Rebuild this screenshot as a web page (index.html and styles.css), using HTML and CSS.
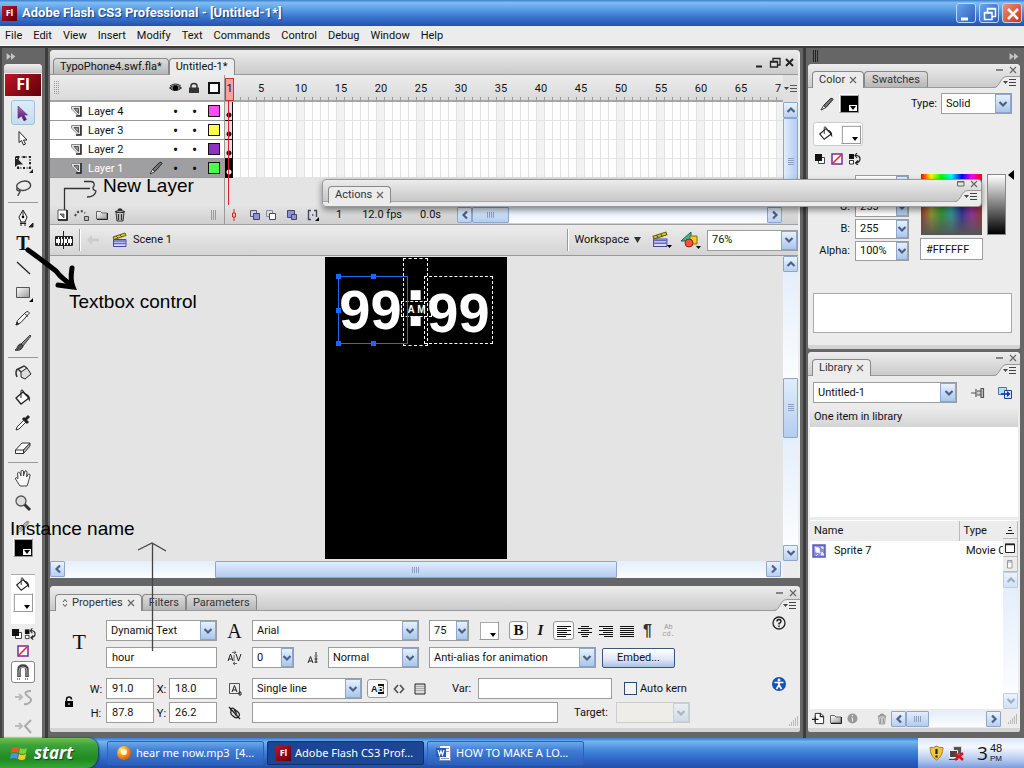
FILE: index.html
```html
<!DOCTYPE html>
<html lang="en">
<head>
<meta charset="utf-8">
<title>Adobe Flash CS3 Professional - [Untitled-1*]</title>
<link rel="stylesheet" href="styles.css">
</head>
<body>
<svg width="0" height="0" class="defs" aria-hidden="true">
  <defs>
    <linearGradient id="gGrey" x1="0" y1="0" x2="1" y2="1"><stop offset="0" stop-color="#fff"/><stop offset="1" stop-color="#999"/></linearGradient>
    <linearGradient id="gPurple" x1="0" y1="0" x2="0" y2="1"><stop offset="0" stop-color="#c060d0"/><stop offset="1" stop-color="#401060"/></linearGradient>
    <radialGradient id="gOrange" cx=".35" cy=".3" r=".8"><stop offset="0" stop-color="#fff3c0"/><stop offset=".35" stop-color="#ffb020"/><stop offset="1" stop-color="#d84800"/></radialGradient>
  </defs>
  <symbol id="down" viewBox="0 0 10 10"><path d="M1.500 3 5 6.500 8.500 3" fill="none" stroke="#4d6185" stroke-width="2.200"/></symbol>
  <symbol id="x" viewBox="0 0 8 8"><path d="M1 1 7 7M7 1 1 7" fill="none" stroke="#666" stroke-width="1.200"/></symbol>
  <symbol id="notch" viewBox="0 0 26 12"><path d="M0 12C6 12 6 .5 13 .5H26V12Z" fill="#ececec"/><path d="M0 11.500C6 11.500 6 .5 13 .5H26" fill="none" stroke="#999"/><path d="M9 5H14L11.500 8Z" fill="#444"/><path d="M15 3.500H22M15 6.500H22M15 9.500H22" stroke="#444"/></symbol>
  <symbol id="arrows" viewBox="0 0 10 8"><path d="M0 0 5 4 0 8ZM5 0 10 4 5 8Z" fill="#c4c4c4"/></symbol>
  <symbol id="pencil" viewBox="0 0 16 16"><path d="M1 15 2.500 10.500 11 2Q13.500 .5 14.500 3L6 12.500Z" fill="#f6f6f6" stroke="#333"/><path d="M1 15 2 12 4 14ZM9.500 3.500 13 6.500" fill="#222" stroke="#333"/></symbol>
  <symbol id="pen2" viewBox="0 0 14 14"><path d="M3.500 8.500 10 2Q12.500 0 13 2.500L6 10.500Z" fill="#777" stroke="#222"/><path d="M1 13 3.500 8.500 6 10.500Z" fill="#fff" stroke="#333"/></symbol>
  <symbol id="bucket" viewBox="0 0 18 18"><path d="M2 9 9 3 15 9 7 15Z" fill="#fff" stroke="#222" stroke-width="1.300"/><path d="M7 9V2Q7 0 9 1.500L11 5" fill="none" stroke="#222"/><path d="M10 4Q17 5 16 13Q14 10 13 7Z" fill="#222"/></symbol>
  <symbol id="page" viewBox="0 0 14 14"><path d="M1.500 2.500H10.500V11.500H8L1.500 5Z" fill="#e4e4e4" stroke="#888"/><path d="M11 2V12H6" fill="none" stroke="#222" stroke-width="1.500"/><path d="M4 4.500H8.500V9.500L4 4.500" fill="#999" stroke="#555"/></symbol>
  <symbol id="newpage" viewBox="0 0 14 14"><path d="M3 2H12V12H3Z" fill="#fff" stroke="#555"/><path d="M12 2V12H3" fill="none" stroke="#111" stroke-width="1.500"/><path d="M5 6H9V10Z" fill="#888" stroke="#333" stroke-width=".7"/></symbol>
  <symbol id="newsym" viewBox="0 0 14 14"><path d="M3.500 1.500H9.500L12.500 4.500V12.500H3.500Z" fill="#fff" stroke="#222"/><path d="M9 1.500V5H12.500M0 8H7M3.500 5V11" fill="none" stroke="#222" stroke-width="1.300"/></symbol>
  <symbol id="folder" viewBox="0 0 14 12"><path d="M1.500 10V2.500H5.500L7 4H12V10Z" fill="url(#gGrey)" stroke="#666"/><path d="M2 10.500H12.500V4" fill="none" stroke="#222"/></symbol>
  <symbol id="trash" viewBox="0 0 12 14"><path d="M2 4.500 3 13H9L10 4.500Z" fill="#ccc" stroke="#333"/><path d="M1 4Q6 1 11 4M4 2Q6 0 8 2M4.500 6V12M7.500 6V12" fill="none" stroke="#333" stroke-width="1.300"/></symbol>
  <symbol id="clap" viewBox="0 0 16 16"><path d="M1 5 13 1 14 3.500 2 7.500Z" fill="#d8cc20" stroke="#665c00"/><path d="M4 4 6 6M8 3 10 5" stroke="#554"/><path d="M1.500 7.500H14V14.500H1.500Z" fill="#d8dcff" stroke="#4648a0"/><path d="M2 9H14M2 11.500H14" stroke="#6468c0" stroke-width="1.500"/></symbol>
  <symbol id="bw" viewBox="0 0 12 12"><path d="M4.500 4.500H10.500V10.500H4.500Z" fill="#fff" stroke="#444"/><path d="M1 1H8V8H1Z" fill="#111"/></symbol>
  <symbol id="swap" viewBox="0 0 13 12"><path d="M1 1H6V6H1Z" fill="#111"/><path d="M1.500 7.500H5.500V11H1.500Z" fill="#fff" stroke="#333"/><path d="M7 2.500H9Q12 3 12 6T8 10M9 0 7 2.500 9 5M10 7.500 7.500 10 10 12" fill="none" stroke="#222" stroke-width="1.200"/></symbol>
  <symbol id="none" viewBox="0 0 12 12"><path d="M1 1H11V11H1Z" fill="#fff" stroke="#7a2b9a" stroke-width="1.500"/><path d="M2 10 10 2" stroke="#e22" stroke-width="1.600"/></symbol>
  <symbol id="grip" viewBox="0 0 10 10"><path d="M1 9H2M3 9H4M5 9H6M7 9H8M9 9H10M3 7H4M5 7H6M7 7H8M9 7H10M5 5H6M7 5H8M9 5H10M7 3H8M9 3H10M9 1H10" stroke="#888"/></symbol>
  <symbol id="al" viewBox="0 0 16 14"><path d="M1 2.500H15M1 4.500H11M1 6.500H15M1 8.500H11M1 10.500H15M1 12.500H10" stroke="#111"/></symbol>
</svg>

<header class="titlebar">
  <span class="flicon small">Fl</span>
  <h1>Adobe Flash CS3 Professional - [Untitled-1*]</h1>
  <button class="win" aria-label="Minimize"><svg width="20" height="20"><path d="M4 15H11" stroke="#fff" stroke-width="3"/></svg></button>
  <button class="win" aria-label="Restore"><svg width="20" height="20"><path d="M7.500 8V4.500H15.500V12.500H12M7 5H16M4.500 8.500H12V15.500H4.500ZM4 9H12" fill="none" stroke="#fff" stroke-width="1.500"/></svg></button>
  <button class="win close" aria-label="Close"><svg width="20" height="20"><path d="M5 5 15 15M15 5 5 15" stroke="#fff" stroke-width="2.500"/></svg></button>
</header>
<nav class="menubar">
  <button>File</button><button>Edit</button><button>View</button><button>Insert</button><button>Modify</button><button>Text</button><button>Commands</button><button>Control</button><button>Debug</button><button>Window</button><button>Help</button>
</nav>

<div class="main">
  <aside class="toolcol">
    <svg class="expand" width="10" height="7"><use href="#arrows"/></svg>
    <div class="tools">
      <div class="cap"></div>
      <div class="flicon big">Fl</div>
      <button class="tool on" aria-label="Selection"><svg width="20" height="20" viewBox="0 0 20 20"><path d="M5 3V15.500L8.500 13 11 18 13.500 16.500 11 12H14.500Z" fill="url(#gPurple)" stroke="#636" stroke-width=".6"/></svg></button>
      <button class="tool" aria-label="Subselection"><svg width="20" height="20" viewBox="0 0 20 20"><path d="M6 3.500V14.500L8.500 12.500 10.500 17 12.500 16 10.500 12H14Z" fill="#fff" stroke="#222"/></svg></button>
      <button class="tool" aria-label="Free transform"><svg width="20" height="20" viewBox="0 0 20 20"><path d="M5 4H17V15H5Z" fill="none" stroke="#222" stroke-dasharray="2 1.500"/><path d="M3 3H6V6H3ZM10 3H12V5H10ZM16 3H18V5H16ZM16 9H18V11H16ZM16 14H18V16H16ZM10 14H12V16H10ZM4 14H6V16H4ZM20 16V20H16ZM2 3V14L5 11.500H10Z" fill="#222"/></svg></button>
      <button class="tool" aria-label="Lasso"><svg width="20" height="20" viewBox="0 0 20 20"><path d="M5 11C1 7 7 3 12 3S20 8 15 11 6 12 5 10M5 10C2 11 5 14 7 12C8 15 5 15 5 18" fill="none" stroke="#444" stroke-width="1.400"/></svg></button>
      <hr>
      <button class="tool" aria-label="Pen"><svg width="20" height="20" viewBox="0 0 20 20"><path d="M10 2 14 9 12 14H8L6 9Z" fill="#fff" stroke="#222"/><path d="M10 3V9M7 15.500H13M8 14V18M12 14V18M20 15V19H16Z" fill="#222" stroke="#222"/><circle cx="10" cy="9" r="1.300"/></svg></button>
      <button class="tool letter" aria-label="Text">T</button>
      <button class="tool" aria-label="Line"><svg width="20" height="20" viewBox="0 0 20 20"><path d="M4 4 17 16" stroke="#222" stroke-width="1.300"/></svg></button>
      <button class="tool" aria-label="Rectangle"><svg width="20" height="20" viewBox="0 0 20 20"><path d="M3.500 4.500H16.500V14.500H3.500Z" fill="url(#gGrey)" stroke="#555"/><path d="M20 15V19H16Z"/></svg></button>
      <button class="tool" aria-label="Pencil"><svg width="16" height="16"><use href="#pencil"/></svg></button>
      <button class="tool" aria-label="Brush"><svg width="20" height="20" viewBox="0 0 20 20"><path d="M8 11 17 2 18 3 10 13Z" fill="#888" stroke="#222" stroke-width=".8"/><path d="M2 17C5 16 4 11 8 11L10 13C9 17 5 18 2 17Z" fill="#555" stroke="#222"/></svg></button>
      <hr>
      <button class="tool" aria-label="Ink bottle"><svg width="20" height="20" viewBox="0 0 20 20"><path d="M8 9 14 5 18 11 12 16 8 14Z" fill="#ddd" stroke="#222"/><path d="M8 9 5 6 11 3 14 5M4 6Q2 10 4 14" fill="none" stroke="#333" stroke-width="1.500"/></svg></button>
      <button class="tool" aria-label="Paint bucket"><svg width="18" height="18"><use href="#bucket"/></svg></button>
      <button class="tool" aria-label="Eyedropper"><svg width="20" height="20" viewBox="0 0 20 20"><path d="M3 17 4 14 11 7 13 9 6 16Z" fill="#fff" stroke="#333"/><path d="M10 5 15 10M12 7 16 3" stroke="#222" stroke-width="3"/></svg></button>
      <button class="tool" aria-label="Eraser"><svg width="20" height="20" viewBox="0 0 20 20"><path d="M2.500 12 9 5H17L10.500 12V15.500H2.500Z" fill="#fff" stroke="#333"/><path d="M2.500 12H10.500M10.500 15.500 17 8V5L10.500 12Z" fill="#bbb" stroke="#333"/></svg></button>
      <hr>
      <button class="tool" aria-label="Hand"><svg width="20" height="20" viewBox="0 0 20 20"><path d="M7 18 2.500 11Q2 8.500 5 10.500L4.500 5Q5.500 3.500 7 5L8 8V3Q9 1.500 10.500 3V8L12 3Q13.500 2 14 4L13.500 9 15.500 6Q17.500 5.500 17 8L15 15 14 18Z" fill="#f8f8f8" stroke="#444"/></svg></button>
      <button class="tool" aria-label="Zoom"><svg width="20" height="20" viewBox="0 0 20 20"><path d="M11 11 17 17" stroke="#333" stroke-width="3"/><circle cx="8" cy="8" r="5" fill="#ddd" stroke="#555" stroke-width="1.300"/></svg></button>
      <span class="tool"><svg width="14" height="14"><use href="#pen2"/></svg></span>
      <button class="swatch black" aria-label="Stroke colour"><svg width="6" height="4"><path d="M0 0H6L3 4Z"/></svg></button>
      <div class="fillbox">
        <svg width="16" height="16"><use href="#bucket"/></svg>
        <button class="swatch" aria-label="Fill colour"><svg width="6" height="4"><path d="M0 0H6L3 4Z"/></svg></button>
      </div>
      <div class="pair"><svg width="12" height="12"><use href="#bw"/></svg><svg width="12" height="12"><use href="#swap"/></svg></div>
      <svg class="nocol" width="12" height="12"><use href="#none"/></svg>
      <button class="tool snap" aria-label="Snap to objects"><svg width="18" height="18" viewBox="0 0 18 18"><path d="M5 14V7Q5 3 9 3T13 7V14" fill="none" stroke="#444" stroke-width="3.500"/><path d="M5 13V8Q5 4 9 4T13 8V13" fill="none" stroke="#bbb"/><path d="M3 16H7M11 16H15" stroke="#222" stroke-dasharray="1 1"/></svg></button>
      <button class="tool opt" aria-label="Smooth"><svg width="20" height="20" viewBox="0 0 20 20"><path d="M2 9H9M6 6 9 9 6 12" fill="none" stroke="#bbb" stroke-width="2"/><path d="M18 3C8 3 14 8 17 10S16 17 11 16" fill="none" stroke="#aaa" stroke-width="2"/></svg></button>
      <button class="tool opt" aria-label="Straighten"><svg width="20" height="20" viewBox="0 0 20 20"><path d="M2 9H9M6 6 9 9 6 12" fill="none" stroke="#bbb" stroke-width="2"/><path d="M18 3 12 9 18 16" fill="none" stroke="#aaa" stroke-width="2"/></svg></button>
    </div>
  </aside>

  <main class="center">
    <section class="doc">
      <div class="head doctabs">
        <button class="tab">TypoPhone4.swf.fla*</button><button class="tab active">Untitled-1*</button>
        <svg class="docwin" width="40" height="12"><path d="M2 9.500H8" stroke="#222" stroke-width="2"/><path d="M19 4V1.500H26V8H24M16.500 4.500H23.500V10H16.500ZM16 5H24" fill="none" stroke="#222" stroke-width="1.300"/><path d="M32 2 39 9M39 2 32 9" stroke="#222" stroke-width="2"/></svg>
      </div>
      <div class="timeline">
        <div class="tl-left">
          <div class="tl-head">
            <svg class="dots" width="5" height="13"><path d="M.5 0V13M2.500 0V13M4.500 0V13" stroke="#999" stroke-dasharray="1 1"/></svg>
            <svg class="c1" width="13" height="10" viewBox="0 0 13 10"><path d="M.5 5Q6 0 12.500 5Q6 10 .5 5Z" fill="#777" stroke="#222"/><circle cx="6.500" cy="5" r="2.600"/><path d="M1 3Q6 -1 12 3" fill="none" stroke="#222"/></svg>
            <svg class="c2" width="12" height="12" viewBox="0 0 12 12"><path d="M3 6V4Q3 1.500 6 1.500T9 4V6" fill="none" stroke="#333" stroke-width="1.500"/><path d="M1 5.500H11V11H1Z" fill="#333"/></svg>
            <span class="box outline"></span>
          </div>
          <div class="layer"><svg width="14" height="14"><use href="#page"/></svg><span class="lname">Layer 4</span><i></i><b>•</b><b>•</b><span class="box mag"></span></div>
          <div class="layer"><svg width="14" height="14"><use href="#page"/></svg><span class="lname">Layer 3</span><i></i><b>•</b><b>•</b><span class="box yel"></span></div>
          <div class="layer"><svg width="14" height="14"><use href="#page"/></svg><span class="lname">Layer 2</span><i></i><b>•</b><b>•</b><span class="box pur"></span></div>
          <div class="layer sel"><svg width="14" height="14"><use href="#page"/></svg><span class="lname">Layer 1</span><i><svg width="14" height="14"><use href="#pen2"/></svg></i><b>•</b><b>•</b><span class="box grn"></span></div>
        </div>
        <div class="tl-mid">
          <div class="ruler"><span class="first">1</span><span>5</span><span>10</span><span>15</span><span>20</span><span>25</span><span>30</span><span>35</span><span>40</span><span>45</span><span>50</span><span>55</span><span>60</span><span>65</span><span class="last">7</span></div>
          <div class="frames"><span class="kf"></span></div>
          <div class="frames"><span class="kf"></span></div>
          <div class="frames"><span class="kf"></span></div>
          <div class="frames"><span class="kf on"></span></div>
          <div class="playline"></div>
        </div>
        <div class="tl-right">
          <svg class="tlmenu" width="13" height="10"><path d="M0 3H5L2.500 6Z" fill="#444"/><path d="M6 1.500H13M6 4.500H13M6 7.500H13" stroke="#555"/></svg>
          <div class="vsb"><button class="sbtn up" aria-label="Scroll up"><svg width="10" height="10"><use href="#down"/></svg></button><span class="thumb full"><svg width="6" height="8"><path d="M0 .5H6M0 2.500H6M0 4.500H6M0 6.500H6" stroke="#8aa0c4"/></svg></span></div>
        </div>
      </div>
      <div class="tl-foot">
        <div class="lbtns">
          <button aria-label="Insert layer"><svg width="14" height="14"><use href="#newpage"/></svg></button>
          <button aria-label="Add motion guide"><svg width="16" height="14"><path d="M1 8Q5 0 11 5" fill="none" stroke="#444" stroke-width="2" stroke-dasharray="2 2"/><path d="M10.500 8.500H14.500V12.500H10.500Z" fill="#bbb" stroke="#444"/></svg></button>
          <button aria-label="Insert folder"><svg width="14" height="12"><use href="#folder"/></svg></button>
          <button aria-label="Delete layer"><svg width="12" height="14"><use href="#trash"/></svg></button>
          <svg class="bars" width="6" height="12"><path d="M.5 1V11M2.500 1V11M4.500 1V11" stroke="#999"/></svg>
        </div>
        <div class="fbtns">
          <svg width="6" height="12"><path d="M3 0V12" stroke="#d22"/><path d="M1.500 4H4.500V8H1.500Z" fill="#fbb" stroke="#d22"/></svg>
          <svg class="on1" width="12" height="12"><path d="M1.500 1.500H7.500V7.500H1.500Z" fill="#cdd0f0" stroke="#557"/><path d="M4.500 4.500H10.500V10.500H4.500Z" fill="#8c92d8" stroke="#446"/></svg>
          <svg width="12" height="12"><path d="M1.500 1.500H7.500V7.500H1.500Z" fill="none" stroke="#88a"/><path d="M4.500 4.500H10.500V10.500H4.500Z" fill="#fff" stroke="#446"/></svg>
          <svg class="on3" width="12" height="12"><path d="M1.500 1.500H8.500V8.500H1.500Z" fill="#8c92d8" stroke="#446"/><path d="M5.500 5.500H10.500V10.500H5.500Z" fill="#8c92d8" stroke="#446"/></svg>
          <svg class="on3" width="12" height="12"><path d="M4 1.500H1.500V10.500H4M7 1.500H9.500V8M5 6H6.500" fill="none" stroke="#446" stroke-width="1.400"/><path d="M12 8V12H8Z"/></svg>
          <span class="fno">1</span><span class="fps">12.0 fps</span><span class="sec">0.0s</span>
        </div>
        <div class="hsb"><button class="sbtn left" aria-label="Scroll left"><svg width="10" height="10"><use href="#down"/></svg></button><span class="thumb t35"><svg width="8" height="6"><path d="M.5 0V6M2.500 0V6M4.500 0V6M6.500 0V6" stroke="#8aa0c4"/></svg></span><span class="track"></span><button class="sbtn right" aria-label="Scroll right"><svg width="10" height="10"><use href="#down"/></svg></button></div>
      </div>
      <div class="scenebar">
        <svg width="20" height="18"><path d="M1.500 5.500H18.500V14.500H1.500Z" fill="#fff" stroke="#222"/><path d="M2 7H18M2 13H18" stroke="#222" stroke-width="2" stroke-dasharray="2 1"/><path d="M6.500 8V12M13.500 8V12M9.500 0V18" stroke="#222"/></svg>
        <span class="vsep"></span>
        <svg width="14" height="12"><path d="M1 6 6 1V4.500H13V7.500H6V11Z" fill="#ccc"/></svg>
        <svg class="clap" width="16" height="16"><use href="#clap"/></svg>
        <span>Scene 1</span>
        <span class="grow"></span>
        <span class="vsep"></span>
        <button class="ws">Workspace <svg width="7" height="6"><path d="M0 0H7L3.500 6Z" fill="#333"/></svg></button>
        <svg width="20" height="18" viewBox="0 0 20 18"><use href="#clap" width="17" height="17"/><path d="M15 14H20L17.500 17Z"/></svg>
        <svg width="20" height="18"><path d="M0 10 10 1V10Z" fill="#3db79a" stroke="#17604f"/><path d="M9 5H16V13H9Z" fill="#f3c928" stroke="#8a6d00"/><circle cx="8" cy="12" r="4" fill="#f0562f" stroke="#922"/><path d="M15 15H20L17.500 18Z"/></svg>
        <span class="combo zoomsel"><select aria-label="Zoom"><option>76%</option></select><span class="arr"><svg width="10" height="10"><use href="#down"/></svg></span></span>
      </div>
      <div class="work">
        <div class="pasteboard">
          <div class="canvas">
            <div class="tf hour">99</div>
            <div class="tf colon">:</div>
            <div class="tf minute">99</div>
            <div class="tf ampm">A M</div>
            <svg class="handles" width="74" height="74"><path d="M3.500 3.500H72M3.500 3.500V70.500H72M72.500 3V71" fill="none" stroke="#2268f0"/><path d="M1 1H6V6H1ZM36 1H41V6H36ZM1 35H6V40H1ZM1 68H6V73H1ZM36 68H41V73H36Z" fill="#1a66ff"/></svg>
          </div>
        </div>
        <div class="vsb wsb"><button class="sbtn up" aria-label="Scroll up"><svg width="10" height="10"><use href="#down"/></svg></button><span class="track t1"></span><span class="thumb v"><svg width="6" height="8"><path d="M0 .5H6M0 2.500H6M0 4.500H6M0 6.500H6" stroke="#8aa0c4"/></svg></span><span class="track t2"></span><button class="sbtn" aria-label="Scroll down"><svg width="10" height="10"><use href="#down"/></svg></button></div>
        <div class="hsb wide"><button class="sbtn left" aria-label="Scroll left"><svg width="10" height="10"><use href="#down"/></svg></button><span class="track h1"></span><span class="thumb h"><svg width="8" height="6"><path d="M.5 0V6M2.500 0V6M4.500 0V6M6.500 0V6" stroke="#8aa0c4"/></svg></span><span class="track h2"></span><button class="sbtn right" aria-label="Scroll right"><svg width="10" height="10"><use href="#down"/></svg></button></div>
        <div class="corner"></div>
      </div>
    </section>

    <section class="panel props">
      <div class="head">
        <button class="tab active"><svg width="6" height="8"><path d="M1 3 3 .5 5 3M1 5 3 7.500 5 5" fill="none" stroke="#555"/></svg> Properties <svg width="8" height="8"><use href="#x"/></svg></button><button class="tab">Filters</button><button class="tab">Parameters</button>
        <span class="ctl"><span class="mc"><svg width="8" height="8"><path d="M0 4H7" stroke="#666" stroke-width="1.500"/></svg><svg width="8" height="8"><use href="#x"/></svg></span><svg width="26" height="12"><use href="#notch"/></svg></span>
      </div>
      <div class="pgrid">
        <div class="side"><span class="bigT">T</span><svg class="lock" width="10" height="12"><path d="M2.500 5V3.500Q2.500 1 5 1T7.500 3.500" fill="none" stroke="#111" stroke-width="1.500"/><path d="M1 5H9V11H1Z"/><path d="M5 7V9" stroke="#fff"/></svg></div>
        <div class="rows">
          <div class="row">
            <span class="combo w111 ind"><select aria-label="Text type"><option>Dynamic Text</option></select><span class="arr"><svg width="10" height="10"><use href="#down"/></svg></span></span>
            <span class="ic serif">A</span>
            <span class="combo w167"><select aria-label="Font"><option>Arial</option></select><span class="arr"><svg width="10" height="10"><use href="#down"/></svg></span></span>
            <span class="combo thin w40 g10"><select aria-label="Font size"><option>75</option></select><span class="arr"><svg width="10" height="10"><use href="#down"/></svg></span></span>
            <button class="swatch g10" aria-label="Text colour"><svg width="6" height="4"><path d="M0 0H6L3 4Z"/></svg></button>
            <button class="sq on bold g10" aria-label="Bold">B</button><button class="sq ital" aria-label="Italic">I</button>
            <button class="sq on" aria-label="Align left"><svg width="16" height="14"><use href="#al"/></svg></button>
            <button class="sq" aria-label="Align centre"><svg width="16" height="14"><path d="M4 2.500H12M1 4.500H15M4 6.500H12M1 8.500H15M4 10.500H12M5 12.500H11" stroke="#111"/></svg></button>
            <button class="sq" aria-label="Align right"><svg width="16" height="14"><path d="M1 2.500H15M5 4.500H15M1 6.500H15M5 8.500H15M1 10.500H15M6 12.500H15" stroke="#111"/></svg></button>
            <button class="sq" aria-label="Justify"><svg width="16" height="14"><path d="M1 2.500H15M1 4.500H15M1 6.500H15M1 8.500H15M1 10.500H15M1 12.500H15" stroke="#111"/></svg></button>
            <button class="sq para" aria-label="Paragraph format">¶</button>
            <button class="sq abcd" aria-label="Text direction">Ab<br>cd.</button>
            <svg class="end" width="14" height="14"><circle cx="7" cy="7" r="6" fill="none" stroke="#222" stroke-width="1.300"/><path d="M5 5.500Q5 3.500 7 3.500T9 5.500Q9 6.500 7 7.500V8.500M7 9.500V11" fill="none" stroke="#111" stroke-width="1.400"/></svg>
          </div>
          <div class="row">
            <input class="w111 ind" aria-label="Instance name" value="hour">
            <span class="ic"><svg width="16" height="16"><path d="M1 11 3.500 4 6 11M2 9H5M9 4 11.500 11 14 4" fill="none" stroke="#222"/><path d="M5 2.500H9M7 .5 9 2.500 7 4M10 13.500H6M8 12 6 13.500 8 15M7 5V11" fill="none" stroke="#444" stroke-width=".8"/></svg></span>
            <span class="combo thin w42"><select aria-label="Letter spacing"><option>0</option></select><span class="arr"><svg width="10" height="10"><use href="#down"/></svg></span></span>
            <span class="ic2"><svg width="12" height="14"><path d="M1 12 3.500 5.500 6 12M2 10H5" fill="none" stroke="#222"/><path d="M9 1V4M7.500 5H10.500M9 6V12M7.500 8H10.500M7.500 11H10.500" stroke="#222"/></svg></span>
            <span class="combo w91"><select aria-label="Character position"><option>Normal</option></select><span class="arr"><svg width="10" height="10"><use href="#down"/></svg></span></span>
            <span class="combo w167 g10"><select aria-label="Rendering"><option>Anti-alias for animation</option></select><span class="arr"><svg width="10" height="10"><use href="#down"/></svg></span></span>
            <button class="embed">Embed...</button>
          </div>
          <div class="row low">
            <label class="lb" for="w">W:</label><input id="w" class="w48" value="91.0"><label class="lx" for="xx">X:</label><input id="xx" class="w48" value="18.0">
            <span class="ic"><svg width="14" height="14"><path d="M1.500 1.500H11.500V11.500H1.500Z" fill="none" stroke="#555"/><path d="M4 10 6.500 3.500 9 10M5 8H8M11 10H13V13H11Z" fill="none" stroke="#222"/></svg></span>
            <span class="combo w110"><select aria-label="Line type"><option>Single line</option></select><span class="arr"><svg width="10" height="10"><use href="#down"/></svg></span></span>
            <button class="sq on ab g5" aria-label="Selectable">A<span>B</span></button>
            <button class="sq" aria-label="Render as HTML"><svg width="12" height="10"><path d="M5 1 1.500 5 5 9M7 1 10.500 5 7 9" fill="none" stroke="#555" stroke-width="1.700"/></svg></button>
            <button class="sq" aria-label="Show border"><svg width="12" height="12"><path d="M1 1H11V11H1Z" fill="#ddd" stroke="#222"/><path d="M2 3.500H10M2 5.500H10M2 7.500H10" stroke="#aaa"/></svg></button>
            <label class="var" for="v">Var:</label><input id="v" class="w134" value="">
            <label class="kern"><input type="checkbox">Auto kern</label>
            <svg class="end" width="14" height="14"><circle cx="7" cy="7" r="7" fill="#1450b8"/><circle cx="7" cy="3" r="1.500" fill="#fff"/><path d="M2.500 5.500H11.500M7 5V8M7 8 4.500 12M7 8 9.500 12" fill="none" stroke="#fff" stroke-width="1.700"/></svg>
          </div>
          <div class="row">
            <label class="lb" for="h">H:</label><input id="h" class="w48" value="87.8"><label class="lx" for="y">Y:</label><input id="y" class="w48" value="26.2">
            <span class="ic"><svg width="14" height="14"><path d="M3 5Q2 2 5 2L10 6Q13 9 10 11Q8 13 5 10Q2 8 3 5ZM1 1 12 13M6 4Q9 6 8 10" fill="#ddd" stroke="#222" stroke-width="1.200"/></svg></span>
            <input class="w306" aria-label="URL link" value="">
            <label class="target" for="t">Target:</label>
            <span class="combo w74 dis"><select id="t" disabled><option></option></select><span class="arr"><svg width="10" height="10"><use href="#down"/></svg></span></span>
            <svg class="end rs" width="10" height="10"><use href="#grip"/></svg>
          </div>
        </div>
      </div>
    </section>
  </main>

  <aside class="dock">
    <div class="dockhead"><svg width="6" height="12"><path d="M.5 0V12M2.500 0V12M4.500 0V12" stroke="#222"/></svg><svg width="10" height="7"><use href="#arrows"/></svg></div>
    <section class="panel color">
      <div class="head">
        <button class="tab active">Color <svg width="8" height="8"><use href="#x"/></svg></button><button class="tab">Swatches</button>
        <span class="ctl"><span class="mc"><svg width="8" height="8"><path d="M0 4H7" stroke="#666" stroke-width="1.500"/></svg><svg width="8" height="8"><use href="#x"/></svg></span><svg width="26" height="12"><use href="#notch"/></svg></span>
      </div>
      <div class="cbody">
        <div class="crow"><svg width="14" height="14"><use href="#pen2"/></svg><button class="swatch black" aria-label="Stroke colour"><svg width="6" height="4"><path d="M0 0H6L3 4Z"/></svg></button><label for="ty">Type:</label><span class="combo w71"><select id="ty"><option>Solid</option></select><span class="arr"><svg width="10" height="10"><use href="#down"/></svg></span></span></div>
        <div class="crow fill"><svg width="16" height="16"><use href="#bucket"/></svg><button class="swatch" aria-label="Fill colour"><svg width="6" height="4"><path d="M0 0H6L3 4Z"/></svg></button></div>
        <div class="cicons"><svg width="12" height="12"><use href="#bw"/></svg><svg width="12" height="12"><use href="#none"/></svg><svg width="13" height="12"><use href="#swap"/></svg></div>
        <div class="mix">
          <div class="chan">
            <label for="r">R:</label><span class="combo thin"><select id="r"><option>255</option></select><span class="arr"><svg width="10" height="10"><use href="#down"/></svg></span></span>
            <label for="g">G:</label><span class="combo thin"><select id="g"><option>255</option></select><span class="arr"><svg width="10" height="10"><use href="#down"/></svg></span></span>
            <label for="b">B:</label><span class="combo thin"><select id="b"><option>255</option></select><span class="arr"><svg width="10" height="10"><use href="#down"/></svg></span></span>
            <label for="a">Alpha:</label><span class="combo thin"><select id="a"><option>100%</option></select><span class="arr"><svg width="10" height="10"><use href="#down"/></svg></span></span>
          </div>
          <div class="spec"><div class="hue"></div><input aria-label="Hex value" value="#FFFFFF"></div>
          <div class="lum"></div>
          <svg class="tri" width="6" height="10"><path d="M6 0V10L0 5Z"/></svg>
        </div>
        <div class="preview"></div>
      </div>
    </section>
    <section class="panel lib">
      <div class="head">
        <button class="tab active">Library <svg width="8" height="8"><use href="#x"/></svg></button>
        <span class="ctl"><span class="mc"><svg width="8" height="8"><path d="M0 4H7" stroke="#666" stroke-width="1.500"/></svg><svg width="8" height="8"><use href="#x"/></svg></span><svg width="26" height="12"><use href="#notch"/></svg></span>
      </div>
      <div class="librow"><span class="combo"><select aria-label="Library document"><option>Untitled-1</option></select><span class="arr"><svg width="10" height="10"><use href="#down"/></svg></span></span>
        <svg width="14" height="12"><path d="M0 6H5M5 2V10M6 4H10V8H6M10 1.500H12.500V10.500H10Z" fill="#ccc" stroke="#555" stroke-width="1.200"/></svg>
        <svg width="15" height="12"><path d="M.5 .5H8.500V7.500H.5Z" fill="#b8dcf4" stroke="#47a"/><path d="M6.500 3.500H13.500V11.500H6.500Z" fill="#cfe4ff" stroke="#248"/><path d="M3 7H10" stroke="#13a" stroke-width="1.500"/><path d="M9 4V10L12.500 7Z" fill="#13a"/></svg>
      </div>
      <div class="count">One item in library</div>
      <div class="libprev"></div>
      <div class="liblist">
        <table><thead><tr><th>Name</th><th class="ty">Type</th></tr></thead>
        <tbody><tr><td><span class="nm"><svg width="14" height="14"><path d="M1 1H13V13H1Z" fill="#8a8cdc" stroke="#5a5cb4" stroke-width="1.500"/><path d="M3 3 7 4 8 9 4 8ZM9 3H11V5ZM10 8 12 11H9ZM6 10 4 12" fill="#fff" stroke="#e4e4ff"/></svg>Sprite 7</span></td><td class="ty">Movie C</td></tr></tbody></table>
        <div class="libside">
          <button aria-label="Sort"><svg width="8" height="8"><path d="M3 1.500H5M2 4.500H6M0 7.500H8" stroke="#222"/></svg></button>
          <button aria-label="Wide view"><svg width="10" height="10"><path d="M.5 1H9.500V9.500H.5Z" fill="#fff" stroke="#222"/><path d="M0 1.500H10" stroke="#222" stroke-width="1.500"/></svg></button>
          <button aria-label="Narrow view"><svg width="6" height="9"><path d="M.5 .5H5V8H.5ZM.5 2H5" fill="#fff" stroke="#999"/></svg></button>
          <div class="vsb pale"><button class="sbtn up" aria-label="Scroll up"><svg width="10" height="10"><use href="#down"/></svg></button><span class="track"></span><button class="sbtn" aria-label="Scroll down"><svg width="10" height="10"><use href="#down"/></svg></button></div>
        </div>
      </div>
      <div class="libfoot">
        <button aria-label="New symbol"><svg width="13" height="13"><use href="#newsym"/></svg></button>
        <button aria-label="New folder"><svg width="14" height="12"><use href="#folder"/></svg></button>
        <button aria-label="Item properties"><svg width="11" height="11"><circle cx="5.500" cy="5.500" r="5" fill="#999"/><path d="M5.500 2V3.500M4.500 5H5.500V8.500" stroke="#eee" fill="none"/></svg></button>
        <button class="faded" aria-label="Delete item"><svg width="10" height="12"><use href="#trash"/></svg></button>
        <div class="hsb"><button class="sbtn left" aria-label="Scroll left"><svg width="10" height="10"><use href="#down"/></svg></button><span class="thumb t23"><svg width="8" height="6"><path d="M.5 0V6M2.500 0V6M4.500 0V6M6.500 0V6" stroke="#8aa0c4"/></svg></span><span class="track"></span><button class="sbtn right" aria-label="Scroll right"><svg width="10" height="10"><use href="#down"/></svg></button></div>
        <svg width="10" height="10"><use href="#grip"/></svg>
      </div>
    </section>
  </aside>
</div>

<footer class="taskbar">
  <button class="start"><svg width="17" height="16" viewBox="0 0 17 16"><path d="M1 3Q4 1 8 3L7 8Q4 6 0 8Z" fill="#ee5522"/><path d="M9 3Q12 5 16 3L15 8Q12 10 8 8Z" fill="#7cd03a"/><path d="M0 9Q3 7 7 9L6 14Q3 12 -1 14Z" fill="#4a90f0"/><path d="M8 9Q11 11 15 9L14 14Q11 16 7 14Z" fill="#ffcc22"/></svg>start</button>
  <button class="task"><svg width="16" height="16"><circle cx="8" cy="8" r="7" fill="url(#gOrange)"/><circle cx="8" cy="7" r="3" fill="#fff6d0"/></svg>hear me now.mp3&nbsp; [4...</button>
  <button class="task active"><span class="flicon small">Fl</span>Adobe Flash CS3 Prof...</button>
  <button class="task"><svg width="16" height="16"><path d="M3.500 .5H14.500V15.500H3.500Z" fill="#fff" stroke="#88a"/><path d="M9 3.500H13M9 6.500H13M5 13.500H13" stroke="#79c"/><path d="M0 3H10V12H0Z" fill="#2a58b8"/><path d="M2 5 3.500 10 5 6 6.500 10 8 5" fill="none" stroke="#fff" stroke-width="1.200"/></svg>HOW TO MAKE A LO...</button>
  <div class="tray">
    <svg width="15" height="16"><path d="M7.500 1Q10 3 14 2.500Q14 11 7.500 15Q1 11 1 2.500Q5 3 7.500 1Z" fill="#f7c433" stroke="#a08040"/><path d="M7.500 4V9M7.500 10.500V12.500" stroke="#222" stroke-width="2.200"/></svg>
    <svg width="16" height="16"><path d="M5.500 1.500H13.500V9.500H5.500Z" fill="#555" stroke="#ddd"/><path d="M1.500 5.500H9.500V12.500H1.500Z" fill="#444" stroke="#eee"/><path d="M1 14.500H10" stroke="#444"/><path d="M7 8 15 15M15 8 7 15" stroke="#e01020" stroke-width="2.500"/></svg>
    <span class="clock"><span class="hr">3</span><span class="mm">48<small>PM</small></span></span>
  </div>
</footer>

<section class="actions">
  <button class="tab active">Actions <svg width="8" height="8"><use href="#x"/></svg></button>
  <span class="ctl"><span class="mc"><svg width="8" height="8"><path d="M.5 1.500H7V6H.5ZM0 2H7" fill="none" stroke="#666"/></svg><svg width="8" height="8"><use href="#x"/></svg></span><svg width="26" height="12"><use href="#notch"/></svg></span>
</section>

<span class="note n1">New Layer</span>
<span class="note n2">Textbox control</span>
<span class="note n3">Instance name</span>
<svg class="ink" width="200" height="660" viewBox="0 0 200 660" aria-hidden="true">
  <path d="M64.500 210V188.500H90M84 181.500H91Q95 182 94 186Q91 189 96 191Q95 197 87 197" fill="none" stroke="#333" stroke-width="1.300"/>
  <path d="M28 250Q42 260 56 271Q62 279 72 285" fill="none" stroke="#000" stroke-width="5" stroke-linecap="round"/><path d="M72 268Q70 280 73 287Q65 286 58 285" fill="none" stroke="#000" stroke-width="5" stroke-linecap="round"/>
  <path d="M152.500 544V651M138 550 152 543 166 551" fill="none" stroke="#444" stroke-width="1.300"/>
</svg>
</body>
</html>
```

FILE: styles.css
```css
* { box-sizing: border-box; }
html, body { height: 100%; }
body {
  margin: 0;
  display: flex;
  flex-direction: column;
  position: relative;
  overflow: hidden;
  background: #5f5f5f;
  color: #111;
  font: 11px/14px Roboto, "Liberation Sans", sans-serif;
}
button, input, select { font: inherit; color: inherit; margin: 0; padding: 0; border: 0; background: none; border-radius: 0; }
svg { display: block; flex: none; overflow: visible; }
.defs { position: absolute; }
.grow { flex: 1; }

/* window chrome */
.titlebar {
  flex: none; height: 26px; display: flex; align-items: center; gap: 3px; padding: 0 2px;
  background: linear-gradient(#3d7fd0 0, #7fbcf0 10%, #5b9fe4 35%, #3a76cf 65%, #2452ae 100%);
}
.titlebar h1 { flex: 1; margin: 0 0 0 2px; color: #fff; font: bold 13px/18px Roboto, sans-serif; text-shadow: 1px 1px 1px #123a80; }
.flicon { background: linear-gradient(135deg, #c01424, #5c0008); color: #fff; font-family: "Open Sans", sans-serif; font-weight: bold; text-align: center; }
.flicon.small { flex: none; width: 15px; height: 15px; font-size: 9px; line-height: 14px; }
.win { width: 20px; height: 20px; border: 1px solid #b9d6f4; border-radius: 3px; background: linear-gradient(135deg, #6aa5ea, #2a5cc0); display: grid; place-items: center; }
.win.close { background: linear-gradient(135deg, #f09070, #c8341a); }
.menubar { flex: none; height: 20px; background: #ececec; display: flex; align-items: center; padding-left: 5px; gap: 11px; border-bottom: 1px solid #fff; }

/* columns */
.main { flex: 1; min-height: 0; display: grid; grid-template: minmax(0, 1fr) / 45px minmax(0, 1fr) 218px; background: #666; border-top: 2px solid #3c3c3c; }
.toolcol { border-left: 2px solid #444; padding: 5px 0 0 2px; display: flex; flex-direction: column; overflow: hidden; }
.expand { margin: 0 0 4px 2px; }
.tools { width: 38px; flex: 1; min-height: 0; background: #ececec; border-radius: 4px 4px 0 0; display: flex; flex-direction: column; align-items: center; }
.cap { flex: none; width: 100%; height: 9px; margin-bottom: 1px; border-radius: 4px 4px 0 0; background: linear-gradient(#f0f0f0, #c8c8c8); }
.flicon.big { flex: none; width: 36px; height: 22px; font-size: 16px; line-height: 21px; margin-bottom: 4px; }
.tool { flex: none; width: 24px; height: 25px; display: grid; place-items: center; border: 1px solid transparent; }
.tool.on { background: linear-gradient(#dcecf8, #c4dcf4); border-color: #a4bfdc; border-radius: 3px; }
.tool.letter { font: bold 20px/20px "Liberation Serif", serif; }
.tools hr { flex: none; width: 30px; height: 1px; margin: 2px 0; border: 0; background: #999; }
.tools > span.tool { height: 23px; opacity: .5; }
.swatch { flex: none; width: 20px; height: 19px; background: #fff; border: 1px solid #eee; border-right-color: #999; border-bottom-color: #999; display: flex; align-items: flex-end; justify-content: flex-end; padding: 1px; box-shadow: inset 1px 1px 0 #aaa; }
.swatch svg { box-sizing: content-box; padding: 1px; background: #fff; }
.swatch.black { background: #000; border-color: #fff #999 #999 #fff; }
.fillbox { flex: none; width: 24px; margin-top: 17px; padding: 2px 0 12px; background: #fff; display: flex; flex-direction: column; align-items: center; border-top: 1px solid #aaa; }
.pair { flex: none; display: flex; gap: 1px; margin: 4px 0 5px; }
.nocol { margin-bottom: 4px; }
.tool.snap { height: 22px; border: 1px solid #888; border-radius: 3px; background: #fff; }
.tool.opt { height: 29px; }

.center { border-left: 3px solid #3c3c3c; border-right: 3px solid #3c3c3c; padding: 2px 3px 6px 2px; display: flex; flex-direction: column; gap: 8px; min-height: 0; }
.doc { flex: 1; min-height: 0; display: flex; flex-direction: column; background: #e4e4e4; border-radius: 4px 4px 0 0; border-right: 2px solid #eee; }

/* tab headers */
.head { flex: none; height: 25px; display: flex; align-items: flex-end; padding-left: 5px; background: linear-gradient(#ededed, #cacaca); border-bottom: 1px solid #999; border-radius: 4px 4px 0 0; }
.tab { height: 16px; padding: 0 7px; display: flex; align-items: center; gap: 4px; background: linear-gradient(#dedede, #b6b6b6); border: 1px solid #888; border-bottom: 0; border-radius: 4px 4px 0 0; color: #333; white-space: nowrap; flex: none; }
.tab.active { height: 17px; background: #ececec; margin-bottom: -1px; }
.props .tab, .tab.active { padding: 0 6px; }
.doctabs { padding-left: 3px; }
.doctabs .tab { padding: 0 6px; color: #111; }
.docwin { margin: 0 4px 5px auto; }
.ctl { margin-left: auto; display: flex; flex-direction: column; align-items: flex-end; gap: 2px; margin-bottom: -1px; }
.mc { display: flex; gap: 5px; padding-right: 3px; }

/* timeline */
.timeline { flex: none; display: grid; grid-template-columns: 175px minmax(0, 1fr) 15px; height: 130px; background: #e4e4e4; }
.tl-left { border-right: 1px solid #999; }
.tl-head { height: 27px; display: flex; align-items: center; padding: 0 4px; background: linear-gradient(#ececec, #dadada); border-bottom: 2px solid #a4a4a4; }
.tl-head .dots { margin-right: auto; }
.tl-head .c1 { margin-right: 6px; }
.tl-head .c2 { margin-right: 8px; }
.box { flex: none; width: 12px; height: 12px; border: 1px solid #111; }
.box.outline { border-width: 2px; background: #fff; }
.mag { background: #ff4cf0; } .yel { background: #ffff4c; } .pur { background: #9030c8; } .grn { background: #4cff4c; }
.layer { height: 19px; display: flex; align-items: center; padding: 0 4px 0 20px; background: #fff; border-bottom: 1px solid #999; }
.layer.sel { background: #9f9fa2; color: #fff; }
.lname { flex: 1; padding: 2px 0 0 4px; }
.layer i { width: 17px; }
.layer b { width: 19px; text-align: center; color: #111; font: bold 11px/12px "Noto Sans", sans-serif; }
.layer .box { margin-left: 4px; }
.tl-mid { position: relative; overflow: hidden; }
.ruler { height: 27px; display: flex; align-items: flex-start; padding-top: 7px; border-bottom: 2px solid #a4a4a4; background: repeating-linear-gradient(90deg, transparent 0 7px, #999 7px 8px) 0 100% / 100% 3px no-repeat, linear-gradient(#ececec, #dadada); }
.ruler span { flex: none; width: 40px; text-align: center; }
.ruler .last { width: auto; padding-left: 14px; }
.ruler .first { width: 9px; height: 23px; margin: -4px 7px 0 0; padding-top: 3px; background: #ffa0a0; border: 1px solid #c33; }
.frames { height: 19px; border-bottom: 1px solid #e4e4e4; background: repeating-linear-gradient(90deg, transparent 0 7px, #e2e2e2 7px 8px), repeating-linear-gradient(90deg, transparent 0 32px, #f2f2f2 32px 40px), #fff; }
.kf { display: block; width: 8px; height: 19px; border-right: 1px solid #111; border-bottom: 1px solid #111; background: radial-gradient(circle at 4px 13px, #111 0 2px, #e2e2e2 3px); }
.kf.on { background: radial-gradient(circle at 4px 13px, #fff 0 2px, #000 3px); }
.playline { position: absolute; left: 3px; top: 26px; bottom: 0; width: 1px; background: #e02030; }
.tl-right { display: flex; flex-direction: column; background: #e0e0e0; }
.tlmenu { margin: 9px 1px 8px; }
.vsb { flex: 1; display: flex; flex-direction: column; width: 15px; background: #eef4fc; }
.hsb { display: flex; background: #eef4fc; height: 16px; min-width: 0; }
.sbtn { flex: none; width: 15px; height: 16px; display: grid; place-items: center; border: 1px solid #8ca6cc; border-radius: 1px; background: linear-gradient(#eaf3ff, #b8d0ee); }
.sbtn.up svg { transform: rotate(180deg); }
.sbtn.left svg { transform: rotate(90deg); }
.sbtn.right svg { transform: rotate(-90deg); }
.thumb { display: grid; place-items: center; border: 1px solid #8ca6cc; border-radius: 1px; background: linear-gradient(#e0edfc, #b4cdee); }
.thumb.full { flex: 1; background: linear-gradient(90deg, #e0edfc, #b4cdee); }
.track { flex: 1; background: linear-gradient(#e4eefa, #fbfdff); }
.t35 { width: 37px; } .t23 { width: 23px; }
.tl-foot { flex: none; height: 20px; display: grid; grid-template-columns: 175px 232px minmax(0, 1fr); align-items: center; padding-right: 16px; background: linear-gradient(#e4e4e4, #cfcfcf); border-bottom: 1px solid #a0a0a0; }
.lbtns { display: flex; align-items: center; padding: 0 7px 0 5px; gap: 5px; height: 100%; border-right: 1px solid #999; }
.lbtns .bars { margin-left: auto; }
.fbtns { display: flex; align-items: center; gap: 4px; padding-left: 6px; }
.on1 { margin-left: 8px; } .on3 { margin-left: 5px; }
.fno { margin-left: 13px; } .fps { margin-left: 16px; } .sec { margin-left: 14px; }

.scenebar { flex: none; height: 31px; display: flex; align-items: center; gap: 5px; padding-left: 4px; background: linear-gradient(#ececec, #d4d4d4); border-bottom: 1px solid #999; }
.vsep { width: 2px; height: 22px; border-left: 1px solid #999; border-right: 1px solid #fff; }
.scenebar .clap { margin-left: 7px; }
.ws { display: flex; align-items: center; gap: 5px; margin-right: 6px; }
.scenebar svg + svg { margin-left: 4px; }
.zoomsel { width: 91px; margin-left: 1px; }

/* drop-downs and fields */
.combo { display: grid; height: 21px; background: #fff; border: 1px solid #9c9c9c; flex: none; }
.combo select { grid-area: 1 / 1; width: 100%; appearance: none; padding-left: 4px; }
.combo .arr { grid-area: 1 / 1; justify-self: end; width: 16px; margin: 0; display: grid; place-items: center; pointer-events: none; border: 1px solid #8ca6cc; background: linear-gradient(#e6f1ff, #a9c6ea); }
.combo.thin .arr { width: 12px; }
.combo.dis { border-color: #ccc; background: #eeede8; }
.combo.dis .arr { opacity: .4; }
input { height: 21px; background: #fff; border: 1px solid #9c9c9c; padding-left: 5px; min-width: 0; flex: none; }
.w40 { width: 40px; } .w42 { width: 42px; } .w48 { width: 48px; } .w71 { width: 71px; } .w74 { width: 74px; } .w91 { width: 91px; }
.w110 { width: 110px; } .w111 { width: 111px; } .w134 { width: 134px; } .w167 { width: 167px; } .w306 { width: 306px; }
.g5 { margin-left: 5px; } .g10 { margin-left: 10px; }

/* stage */
.work { flex: 1; min-height: 0; display: grid; grid-template: minmax(0, 1fr) 17px / minmax(0, 1fr) 15px; }
.pasteboard { display: flex; justify-content: center; padding: 1px 1px 2px 0; min-height: 0; overflow: hidden; }
.canvas { position: relative; width: 182px; background: #000; color: #fff; font-family: "Liberation Sans", sans-serif; font-weight: bold; }
.tf { position: absolute; text-align: center; border: 1px dashed #fff; }
.hour { left: 13px; top: 19px; width: 69px; height: 68px; font-size: 56px; line-height: 66px; border-color: transparent; text-indent: -4px; }
.minute { left: 99px; top: 19px; width: 69px; height: 68px; font-size: 56px; line-height: 72px; }
.colon { left: 78px; top: 1px; width: 25px; height: 88px; font-size: 70px; line-height: 86px; }
.ampm { left: 76px; top: 44px; width: 31px; height: 16px; font-size: 10px; line-height: 15px; }
.handles { position: absolute; left: 10px; top: 16px; }
.wsb .t1 { flex: 105; } .wsb .t2 { flex: 106; }
.thumb.v { height: 60px; }
.hsb.wide { height: 17px; padding-right: 2px; }
.h1 { flex: 150; } .thumb.h { flex: 402; } .h2 { flex: 149; }
.corner { background: #ececec; }

/* properties */
.panel { background: #ececec; border-radius: 4px 4px 2px 2px; border-bottom: 4px solid #d4d4d4; display: flex; flex-direction: column; min-height: 0; }
.props { flex: none; }
.pgrid { display: grid; grid-template-columns: 36px minmax(0, 1fr); padding: 9px 2px 5px 0; }
.side { display: flex; flex-direction: column; align-items: flex-end; padding: 10px 0 15px; justify-content: space-between; }
.bigT { font: 22px/24px "Liberation Serif", serif; }
.lock { margin-right: 12px; }
.rows { display: flex; flex-direction: column; gap: 4px; }
.row { display: flex; align-items: center; height: 21px; }
.row.low { margin-top: 6px; margin-bottom: -1px; }
.row:nth-child(2) { margin-top: 2px; }
.ind { margin-left: 20px; }
.ic { width: 35px; flex: none; display: grid; place-items: center; }
.serif { font: 20px/20px "Liberation Serif", serif; }
.ic2 { width: 34px; display: grid; place-items: center; padding-left: 4px; }
.lb { width: 20px; text-align: center; padding-top: 3px; flex: none; }
.lx { width: 15px; text-align: center; padding-top: 3px; flex: none; }
.sq { flex: none; width: 21px; height: 19px; display: grid; place-items: center; }
.sq.on { border: 1px solid #999; border-radius: 3px; background: #f8f8f8; }
.bold { font: bold 15px/15px "Liberation Serif", serif; width: 19px; }
.ital { font: italic bold 15px/15px "Liberation Serif", serif; width: 25px; }
.para { font: bold 16px/16px "Liberation Sans", sans-serif; color: #333; }
.abcd { font: 7px/7px "Liberation Mono", monospace; color: #999; }
.ab { display: flex; align-items: center; justify-content: center; font: bold 9px/10px "Liberation Sans", sans-serif; }
.ab span { background: #111; color: #fff; }
.end { margin: -16px 12px 0 auto; }
.row.low .end { margin: -10px 12px 0 auto; }
.end.rs { margin: 8px 0 -8px auto; }
.embed { width: 73px; height: 20px; margin-left: 6px; border: 1px solid #3a557f; border-radius: 2px; background: linear-gradient(#fff, #dce6f5 60%, #a8bfe4); }
.var { width: 48px; padding-left: 22px; }
.kern { display: flex; align-items: center; gap: 3px; margin-left: 12px; }
.kern input { appearance: none; width: 13px; height: 13px; padding: 0; border-color: #2c4a70; background: #f4f4f0; }
.target { width: 58px; padding-left: 16px; }

/* right dock */
.dock { padding: 3px 4px 6px 2px; display: flex; flex-direction: column; gap: 3px; min-height: 0; }
.dockhead { height: 10px; display: flex; justify-content: space-between; align-items: center; padding: 0 1px 0 5px; }
.color { flex: none; }
.cbody { padding: 5px 6px 12px 5px; }
.crow { display: flex; align-items: center; gap: 5px; padding-left: 7px; height: 21px; }
.crow label { margin-left: auto; margin-right: -1px; }
.crow .w71 { margin-right: 2px; }
.crow.fill { width: 50px; height: 24px; margin-top: 8px; padding-left: 4px; gap: 7px; background: #fff; border: 1px solid #ccc; border-radius: 3px; }
.cicons { display: flex; gap: 5px; padding: 7px 0 0 1px; }
.mix { display: flex; align-items: flex-start; margin-top: 9px; }
.chan { display: grid; grid-template-columns: 37px 54px; gap: 2px 5px; align-items: center; padding-top: 1px; }
.chan label { text-align: right; }
.chan .combo { height: 20px; }
.spec { width: 63px; margin-left: 11px; display: flex; flex-direction: column; gap: 3px; }
.spec input { width: 63px; height: 22px; }
.hue { height: 61px; margin: 0 1px; background: linear-gradient(transparent, #555), linear-gradient(90deg, #f00, #ff0, #0f0, #0ff, #00f, #f0f, #f00); }
.lum { width: 19px; height: 61px; margin-left: 4px; border: 1px solid #888; background: linear-gradient(#fff, #000); }
.tri { margin: -4px 0 0 2px; }
.preview { height: 40px; margin-top: 32px; margin-right: 2px; background: #fff; border: 1px solid #aaa; }
.lib { flex: 1; }
.color .head, .lib .head { height: 24px; padding-left: 4px; }
.librow { display: flex; align-items: center; gap: 14px; padding: 6px 8px 4px 5px; }
.librow .combo { flex: 1; }
.librow svg { margin-right: -1px; }
.count { flex: none; height: 20px; margin: 0 2px; padding: 3px 4px; background: linear-gradient(#ececec, #d4d4d4); }
.libprev { flex: none; height: 90px; margin: 0 2px; background: #fff; }
.liblist { flex: 1; min-height: 0; display: grid; grid-template-columns: minmax(0, 1fr) 15px; margin: 3px 2px 0; background: #fff; border-top: 1px solid #fff; }
table { width: 100%; table-layout: fixed; border-collapse: collapse; align-self: start; }
th, td { text-align: left; font-weight: normal; padding: 0 0 0 4px; height: 20px; white-space: nowrap; overflow: hidden; }
th { background: #ececec; }
td { padding-left: 2px; }
.nm { display: flex; align-items: center; gap: 8px; }
.ty { width: 44px; }
th.ty { border-left: 1px solid #bbb; }
td.ty { padding-left: 7px; }
.libside { display: flex; flex-direction: column; background: #ececec; }
.libside > button { height: 18px; display: grid; place-items: center; border: 1px solid #bbb; border-width: 0 1px 1px 0; }
.libside > button:nth-child(3) { height: 15px; }
.vsb.pale .sbtn { opacity: .5; }
.libfoot { flex: none; height: 19px; display: flex; align-items: center; gap: 4px; padding: 0 3px 0 4px; }
.libfoot .faded { opacity: .5; margin-left: 15px; }
.libfoot .hsb { flex: 1; margin-right: 2px; }

/* floating panel */
.actions { position: absolute; left: 322px; top: 179px; width: 660px; height: 28px; display: flex; align-items: flex-end; padding: 0 0 4px 5px; background: linear-gradient(#ececec, #c6c6c6 82%, #999 82%, #ececec 86%); border: 1px solid #999; border-radius: 4px; box-shadow: 0 3px 6px rgba(0, 0, 0, .45); }
.actions .ctl { margin-bottom: 0; }

/* annotations */
.note { position: absolute; font: 19px/22px "Liberation Sans", Arial, sans-serif; color: #000; white-space: nowrap; }
.n1 { left: 103px; top: 175px; }
.n2 { left: 69px; top: 291px; }
.n3 { left: 10px; top: 518px; }
.ink { position: absolute; left: 0; top: 0; pointer-events: none; }

/* taskbar */
.taskbar { flex: none; height: 30px; display: flex; align-items: center; gap: 3px; color: #fff; background: linear-gradient(#3b7ad6 0, #75b4ec 12%, #4488dc 40%, #2d62c4 75%, #234ea8 100%); }
.start { width: 98px; height: 30px; display: flex; align-items: center; gap: 6px; padding-left: 11px; margin-right: 6px; border-radius: 0 10px 12px 0; background: linear-gradient(#6cc050, #3aa23a 25%, #1f8a20 70%, #38a838); font: italic bold 17px/24px "Open Sans", sans-serif; text-shadow: 1px 1px 1px #143; box-shadow: 1px 0 2px #134; }
.task { width: 157px; height: 24px; display: flex; align-items: center; gap: 4px; padding-left: 8px; border: 1px solid #2f62b8; border-radius: 2px; background: linear-gradient(#6aa8ea, #3f7cd4 40%, #2c60bc); font: 11px/14px "Noto Sans", sans-serif; white-space: nowrap; overflow: hidden; }
.task.active { background: #1d4596; border-color: #14306c; }
.tray { margin-left: auto; width: 106px; height: 30px; padding-left: 11px; display: flex; align-items: center; gap: 4px; color: #111; background: linear-gradient(#dbe6fa, #f4f8ff 30%, #b8ccf0 70%, #7b9cdc); }
.clock { display: flex; align-items: center; margin-left: 9px; gap: 2px; }
.hr { font: 19px/20px "Open Sans", sans-serif; }
.mm { font: 11px/12px "Liberation Sans", sans-serif; display: flex; flex-direction: column; }
.mm small { font-size: 8px; line-height: 10px; }
```
